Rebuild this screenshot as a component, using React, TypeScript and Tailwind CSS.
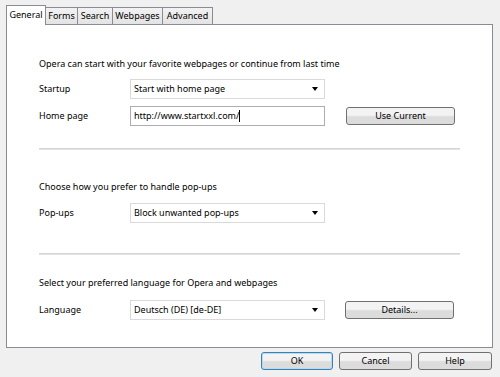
import React from 'react';

const tabs = [
  { label: 'Forms', w: 'w-[32px]' },
  { label: 'Search', w: 'w-[35px]' },
  { label: 'Webpages', w: 'w-[50px]' },
  { label: 'Advanced', w: 'w-[50px]' },
];

function Select({ value }: { value: string }) {
  return (
    <div className="w-[195px] h-[20px] border border-[#dadada] bg-white flex items-center pl-[3px] pr-[5px]">
      <span className="flex-1 truncate">{value}</span>
      <svg width="6" height="4" viewBox="0 0 6 4" className="mr-[1px]">
        <path d="M0 0h6L3 4z" fill="#000" />
      </svg>
    </div>
  );
}

function Button({ label, w, primary }: { label: string; w: string; primary?: boolean }) {
  return (
    <div
      className={`${w} h-[18px] rounded-[3px] border flex items-center justify-center bg-linear-to-b from-[#f3f3f3] from-45% to-[#dcdcdc] to-55% ${
        primary ? 'border-[#3c7fb1] shadow-[inset_0_0_0_1px_#b6dcf3]' : 'border-[#707070]'
      }`}
    >
      {label}
    </div>
  );
}

function Row({ label, children }: { label: string; children: React.ReactNode }) {
  return (
    <div className="flex items-center h-[20px]">
      <span className="w-[91px]">{label}</span>
      {children}
    </div>
  );
}

export default function App() {
  return (
    <div className="w-[500px] h-[377px] bg-[#f0f0f0] font-['Noto_Sans',sans-serif] text-[9px] leading-4 text-black flex flex-col">
      {/* tab strip */}
      <div className="flex items-end pl-[6px] pt-[5px] h-[24px]">
        <div className="relative z-10 w-[40px] h-[20px] -mb-px bg-white border border-b-0 border-[#898c95] flex items-center justify-center pb-[1px]">
          General
        </div>
        {tabs.map((t, i) => (
          <div
            key={t.label}
            className={`${t.w} h-[17px] border-t border-r border-[#898c95] bg-linear-to-b from-[#f2f2f2] to-[#e3e3e3] flex items-center justify-center ${
              i === 0 ? 'border-l-0' : ''
            }`}
          >
            {t.label}
          </div>
        ))}
      </div>

      {/* panel */}
      <div className="ml-[6px] w-[487px] h-[324px] border border-[#898c95] bg-white pl-[32px] pr-[32px] pt-[31px] flex flex-col">
        <p className="h-4">Opera can start with your favorite webpages or continue from last time</p>
        <div className="mt-[7px]">
          <Row label="Startup">
            <Select value="Start with home page" />
          </Row>
        </div>
        <div className="mt-[7px]">
          <Row label="Home page">
            <div className="w-[195px] h-[20px] border border-[#abadb3] bg-white flex items-center pl-[3px]">
              http://www.startxxl.com/<span className="w-px h-[12px] bg-black" />
            </div>
            <div className="ml-[21px]">
              <Button label="Use Current" w="w-[109px]" />
            </div>
          </Row>
        </div>
        <div className="mt-[22px] h-[2px] bg-[#e3e3e3] border-t border-[#d5d5d5]" />

        <p className="mt-[29px] h-4">Choose how you prefer to handle pop-ups</p>
        <div className="mt-[8px]">
          <Row label="Pop-ups">
            <Select value="Block unwanted pop-ups" />
          </Row>
        </div>
        <div className="mt-[30px] h-[2px] bg-[#e3e3e3] border-t border-[#d5d5d5]" />

        <p className="mt-[20px] h-4">Select your preferred language for Opera and webpages</p>
        <div className="mt-[9px]">
          <Row label="Language">
            <Select value="Deutsch (DE) [de-DE]" />
            <div className="ml-[20px]">
              <Button label="Details..." w="w-[109px]" />
            </div>
          </Row>
        </div>
      </div>

      {/* dialog buttons */}
      <div className="flex justify-end gap-[6px] pr-[8px] mt-[4px]">
        <Button label="OK" w="w-[72px]" primary />
        <Button label="Cancel" w="w-[73px]" />
        <Button label="Help" w="w-[74px]" />
      </div>
    </div>
  );
}
